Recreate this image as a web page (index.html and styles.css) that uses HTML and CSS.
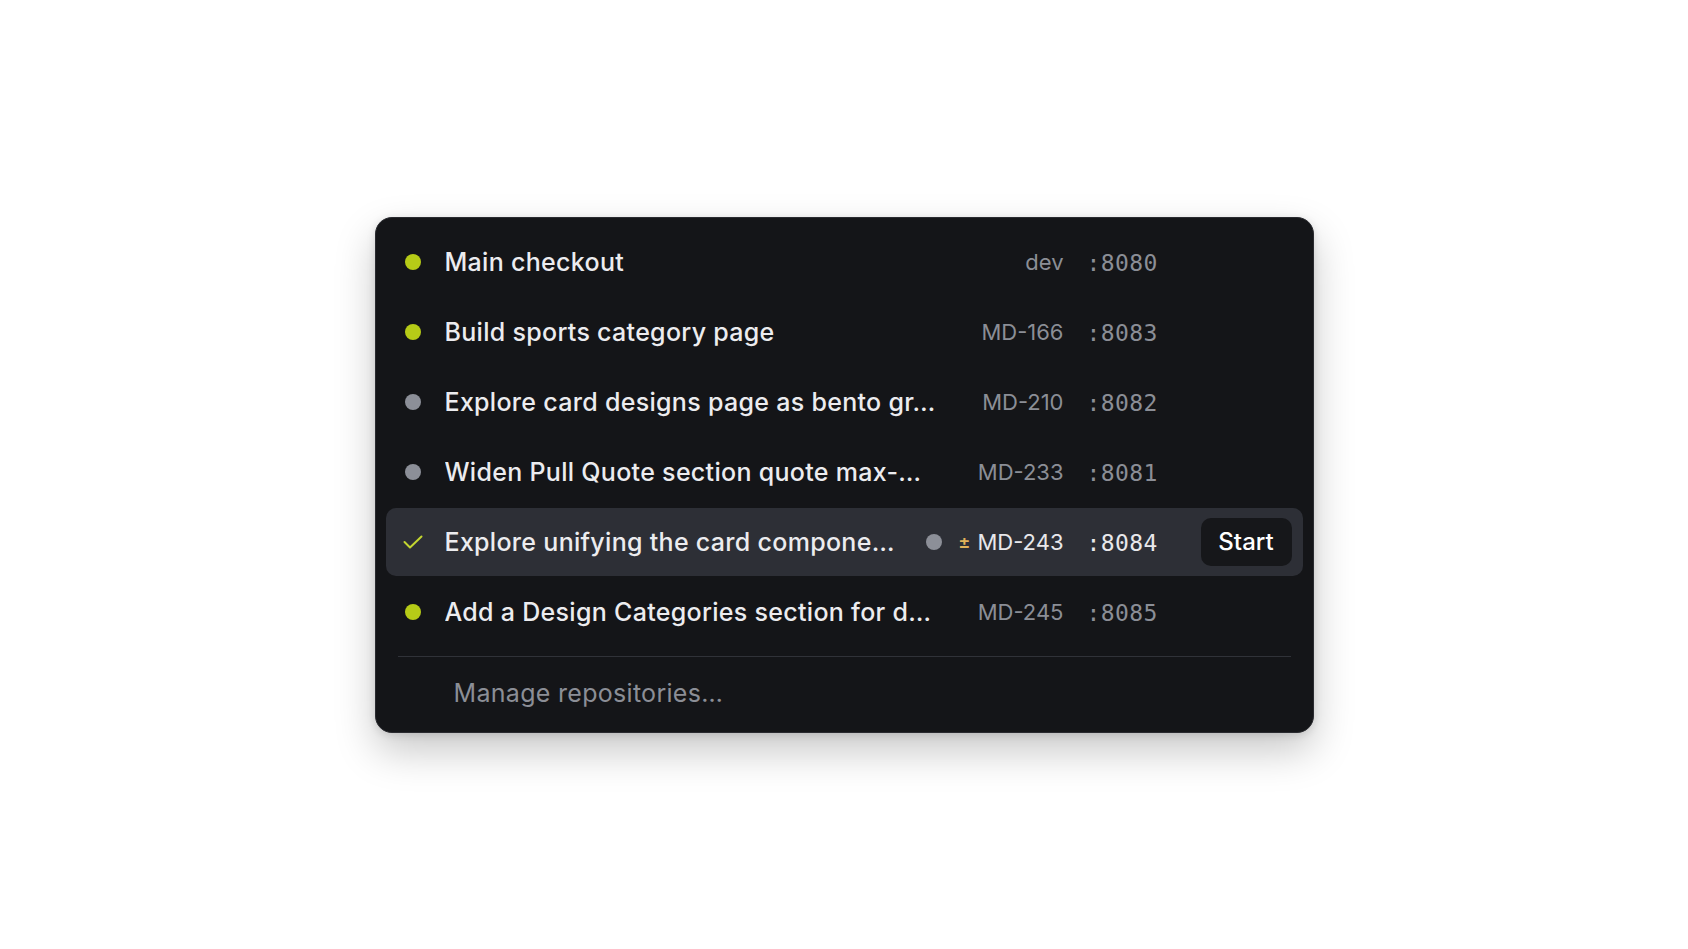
FILE: index.html
```html
<!DOCTYPE html>
<html lang="en">
<head>
  <meta charset="UTF-8">
  <meta name="viewport" content="width=device-width, initial-scale=1.0">
  <title>Worktrees</title>
  <link rel="stylesheet" href="styles.css">
</head>
<body>
  <div class="menu">
    <div class="menu-list">
      <div class="item">
        <span class="status"><span class="dot dot-live"></span></span>
        <span class="title">Main checkout</span>
        <span class="ref"><span class="ticket">dev</span></span>
        <span class="port">:8080</span>
        <span class="action"></span>
      </div>
      <div class="item">
        <span class="status"><span class="dot dot-live"></span></span>
        <span class="title">Build sports category page</span>
        <span class="ref"><span class="ticket">MD-166</span></span>
        <span class="port">:8083</span>
        <span class="action"></span>
      </div>
      <div class="item">
        <span class="status"><span class="dot dot-idle"></span></span>
        <span class="title">Explore card designs page as bento gr…</span>
        <span class="ref"><span class="ticket">MD-210</span></span>
        <span class="port">:8082</span>
        <span class="action"></span>
      </div>
      <div class="item">
        <span class="status"><span class="dot dot-idle"></span></span>
        <span class="title">Widen Pull Quote section quote max-…</span>
        <span class="ref"><span class="ticket">MD-233</span></span>
        <span class="port">:8081</span>
        <span class="action"></span>
      </div>
      <div class="item active">
        <span class="status">
          <svg class="check" viewBox="0 0 20 14" width="20" height="14">
            <path d="M1.5 7l5.5 5.5L18.5 1.5" fill="none" stroke="currentColor" stroke-width="2" stroke-linecap="round" stroke-linejoin="round"/>
          </svg>
        </span>
        <span class="title">Explore unifying the card compone…</span>
        <span class="ref">
          <span class="dot dot-idle"></span>
          <span class="dirty">±</span>
          <span class="ticket">MD-243</span>
        </span>
        <span class="port">:8084</span>
        <span class="action"><button class="btn">Start</button></span>
      </div>
      <div class="item">
        <span class="status"><span class="dot dot-live"></span></span>
        <span class="title">Add a Design Categories section for d…</span>
        <span class="ref"><span class="ticket">MD-245</span></span>
        <span class="port">:8085</span>
        <span class="action"></span>
      </div>
    </div>
    <div class="divider"></div>
    <div class="footer">Manage repositories…</div>
  </div>
</body>
</html>
```

FILE: styles.css
```css
body {
  margin: 0;
  height: 100vh;
  display: flex;
  justify-content: center;
  align-items: center;
  background: #ffffff;
  font-family: Inter, "Noto Sans", sans-serif;
}
.menu {
  width: 939px;
  box-sizing: border-box;
  padding: 10px;
  background: #141518;
  border: 1px solid #2a2b30;
  border-radius: 17px;
  box-shadow: 0 18px 40px rgba(0,0,0,0.22), 0 2px 8px rgba(0,0,0,0.12);
}
.menu-list {
  display: flex;
  flex-direction: column;
  gap: 2px;
}
.item {
  display: flex;
  align-items: center;
  height: 68px;
  padding: 0 11px 0 17px;
  border-radius: 10px;
}
.item.active {
  background: #2d2f36;
}
.status {
  width: 20px;
  display: flex;
  justify-content: center;
  margin-right: 22px;
  flex-shrink: 0;
}
.dot {
  width: 16px;
  height: 16px;
  border-radius: 50%;
  flex-shrink: 0;
}
.dot-live {
  background: #b6cb17;
}
.dot-idle {
  background: #8c8f98;
}
.check {
  color: #c3d630;
  display: block;
}
.title {
  flex: 1;
  min-width: 0;
  white-space: nowrap;
  overflow: hidden;
  text-overflow: ellipsis;
  font-size: 25px;
  font-weight: 500;
  letter-spacing: 0.3px;
  color: #ececef;
  margin-right: 20px;
}
.ref {
  display: flex;
  align-items: center;
  justify-content: flex-end;
  min-width: 88px;
  font-size: 22px;
  color: #8b8e96;
}
.ref .dot {
  margin-right: 16px;
}
.dirty {
  color: #e2b35a;
  font-size: 18px;
  font-weight: 600;
  margin-right: 7px;
}
.port {
  width: 72px;
  margin-left: 23px;
  padding-top: 2px;
  font-family: "DejaVu Sans Mono", "Liberation Mono", monospace;
  font-size: 23px;
  letter-spacing: 0.4px;
  color: #8b8e96;
}
.active .ticket,
.active .port {
  color: #e8e8eb;
}
.action {
  width: 91px;
  margin-left: 42px;
  flex-shrink: 0;
}
.btn {
  width: 91px;
  height: 48px;
  border: none;
  border-radius: 10px;
  background: #16171a;
  color: #ffffff;
  font-family: inherit;
  font-size: 24px;
  font-weight: 500;
}
.divider {
  height: 1px;
  background: #303238;
  margin: 10px 12px 0;
}
.footer {
  padding: 21px 0 14px 68px;
  line-height: 30px;
  font-size: 25px;
  letter-spacing: 0.3px;
  color: #8b8e96;
}
```
